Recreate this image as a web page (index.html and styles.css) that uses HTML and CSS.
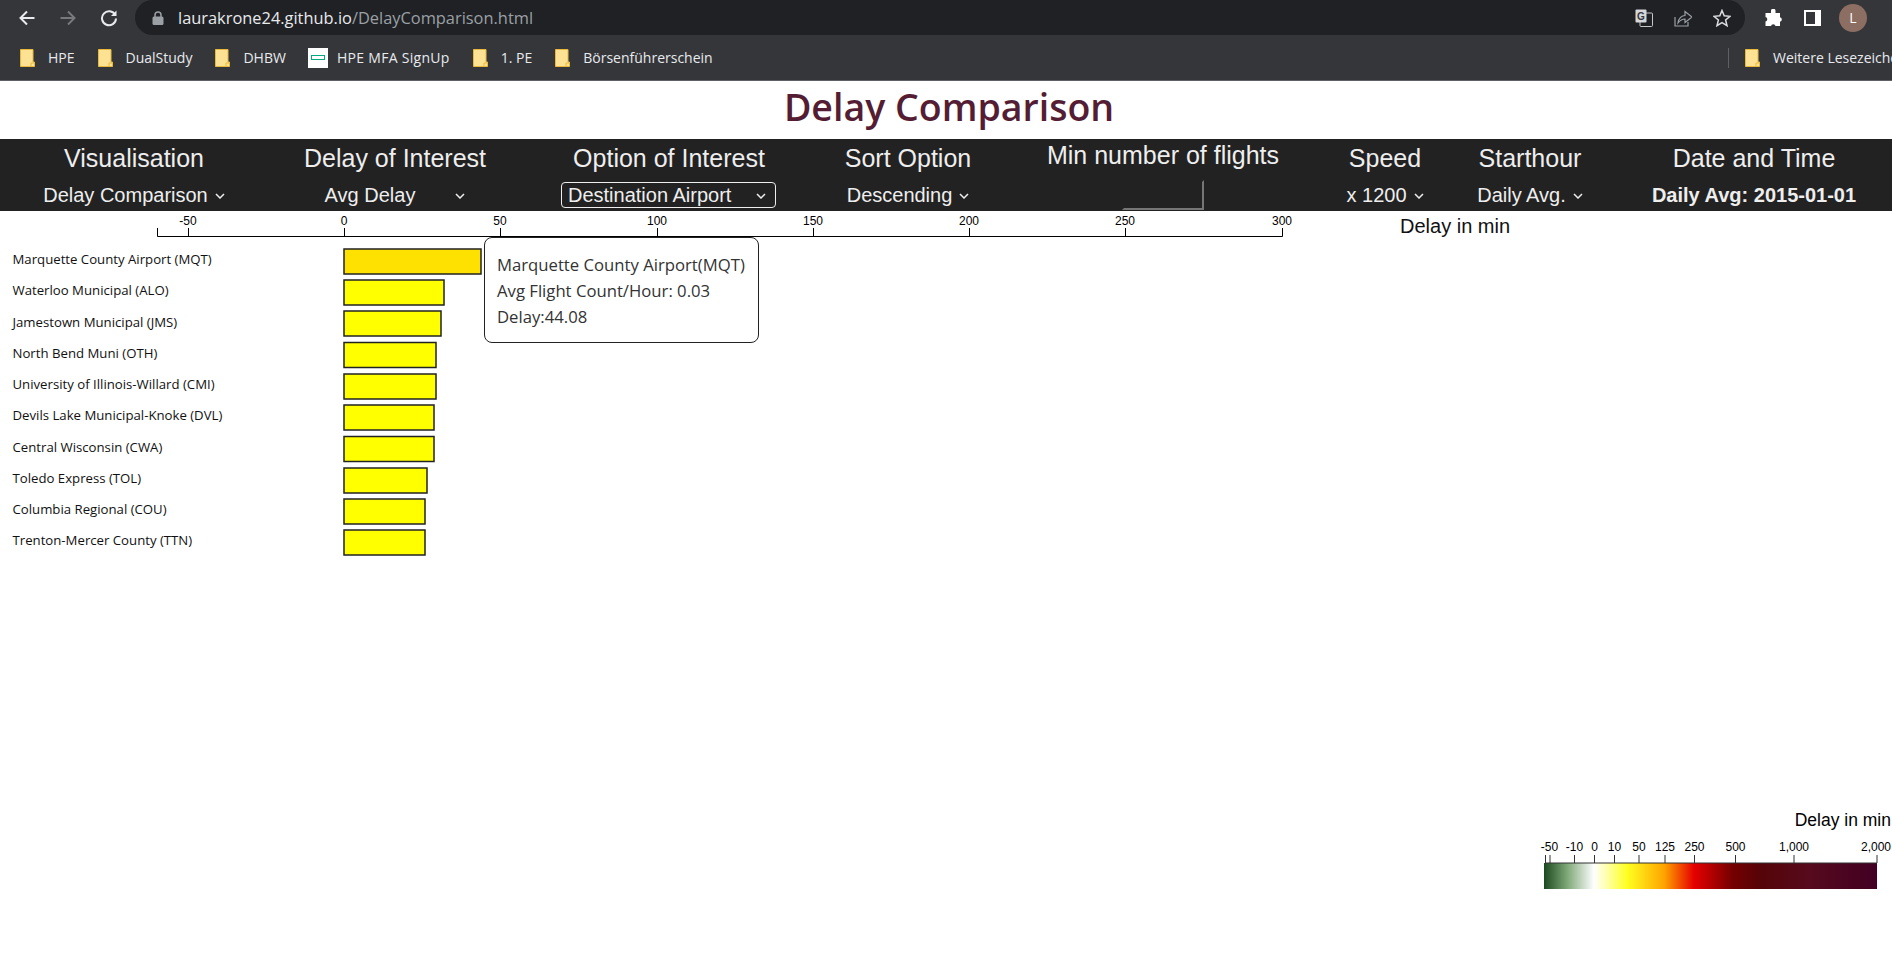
FILE: index.html
```html
<!DOCTYPE html>
<html><head>
<meta charset="utf-8">
<title>Delay Comparison</title>
<link rel="stylesheet" href="styles.css">
</head>
<body>

<div class="toolbar">
	<svg class="nav-icon" width="18" height="18" viewBox="0 0 18 18"><path d="M16.5 9H2.5M9 2.5L2.5 9L9 15.5" class="ico-line"/></svg>
	<svg class="nav-icon" width="18" height="18" viewBox="0 0 18 18"><path d="M1.5 9H15.5M9 2.5L15.5 9L9 15.5" class="ico-line ico-dim"/></svg>
	<svg class="nav-icon" width="18" height="18" viewBox="0 0 18 18"><path d="M15.2 6A7 7 0 1 0 16 9.500" class="ico-line"/><path d="M16.500 1.500V7H11Z" class="ico-fill"/></svg>
	<div class="omnibox">
		<svg class="lock" width="12" height="14" viewBox="0 0 12 14"><path d="M3 6V4a3 3 0 0 1 6 0v2" class="ico-lock"/><rect x="0.500" y="5.500" width="11" height="8.500" rx="1.500" fill="#9aa0a6"/></svg>
		<span class="url">laurakrone24.github.io<span class="url-path">/DelayComparison.html</span></span>
		<div class="omni-icons">
			<svg width="18" height="18" viewBox="0 0 18 18"><rect x="5" y="4" width="12.500" height="13.500" rx="1" fill="none" stroke="#c4c7c5"/><rect x="0.500" y="0.500" width="11" height="13" rx="1" fill="#d5d7da"/><text x="6" y="11" class="g-letter">G</text></svg>
			<svg width="18" height="18" viewBox="0 0 18 18"><path d="M1 8V17H14V13" class="ico-thin"/><path d="M4 14C4.500 9 8 6.500 11 6.500V2.500L18 8L11 13.500V10C8 10 6 11.500 4 14Z" class="ico-thin"/></svg>
			<svg width="18" height="18" viewBox="0 0 18 18"><path d="M9 1.500L11.200 6.800L17 7.300L12.600 11L14 16.700L9 13.700L4 16.700L5.400 11L1 7.300L6.800 6.800Z" class="ico-star"/></svg>
		</div>
	</div>
	<div class="profile-icons">
		<svg width="18" height="18" viewBox="0 0 18 18"><path d="M7 1.500a2.300 2.300 0 0 1 4.500 0V4H16V8.200a2.300 2.300 0 0 1 0 4.500V17H11.500a2.300 2.300 0 0 0-4.500 0H1.500V12.500a2.300 2.300 0 0 0 0-4.500V4H7Z" fill="#fff"/></svg>
		<svg width="17" height="16" viewBox="0 0 17 16"><rect x="1" y="1" width="15" height="14" fill="none" stroke="#fff" stroke-width="2"/><rect x="11" y="1" width="5" height="14" fill="#fff"/></svg>
		<div class="avatar">L</div>
	</div>
</div>

<div class="bookmarks">
	<div class="bm"><svg class="folder" viewBox="0 0 15 18"><use href="#folder-shape"/></svg><span>HPE</span></div>
	<div class="bm"><svg class="folder" viewBox="0 0 15 18"><use href="#folder-shape"/></svg><span>DualStudy</span></div>
	<div class="bm"><svg class="folder" viewBox="0 0 15 18"><use href="#folder-shape"/></svg><span>DHBW</span></div>
	<div class="bm bm-site"><div class="hpe-logo"><div class="hpe-mark"></div></div><span>HPE MFA SignUp</span></div>
	<div class="bm"><svg class="folder" viewBox="0 0 15 18"><use href="#folder-shape"/></svg><span>1. PE</span></div>
	<div class="bm"><svg class="folder" viewBox="0 0 15 18"><use href="#folder-shape"/></svg><span>Börsenführerschein</span></div>
	<div class="bm-more">
		<svg class="folder" viewBox="0 0 15 18"><use href="#folder-shape"/></svg><span>Weitere Lesezeichen</span>
	</div>
</div>

<svg class="defs" width="0" height="0">
	<defs>
		<g id="folder-shape">
			<path d="M0.500 0.500H13V13H14.500V17.500H0.500Z" fill="#fde293" stroke="#e8b93a"/>
			<path d="M11 17V14H14" fill="none" stroke="#e8b93a"/>
		</g>
		<linearGradient id="legend-grad">
			<stop offset="0" stop-color="#1b4a20"/>
			<stop offset="0.07" stop-color="#7fa878"/>
			<stop offset="0.15" stop-color="#ffffff"/>
			<stop offset="0.25" stop-color="#ffff20"/>
			<stop offset="0.36" stop-color="#ffa500"/>
			<stop offset="0.45" stop-color="#e60000"/>
			<stop offset="0.57" stop-color="#720000"/>
			<stop offset="0.65" stop-color="#550408"/>
			<stop offset="0.80" stop-color="#560a1c"/>
			<stop offset="1" stop-color="#420024"/>
		</linearGradient>
	</defs>
</svg>

<h1 class="title">Delay Comparison</h1>

<div class="controls">
	<div class="ctl"><h3>Visualisation</h3><div class="sel">Delay Comparison<svg class="chev" viewBox="0 0 10 6"><path d="M1 1L5 5L9 1"/></svg></div></div>
	<div class="ctl"><h3>Delay of Interest</h3><div class="sel sel-wide">Avg Delay<svg class="chev" viewBox="0 0 10 6"><path d="M1 1L5 5L9 1"/></svg></div></div>
	<div class="ctl"><h3>Option of Interest</h3><div class="sel sel-focus">Destination Airport<svg class="chev" viewBox="0 0 10 6"><path d="M1 1L5 5L9 1"/></svg></div></div>
	<div class="ctl"><h3>Sort Option</h3><div class="sel">Descending<svg class="chev" viewBox="0 0 10 6"><path d="M1 1L5 5L9 1"/></svg></div></div>
	<div class="ctl ctl-input"><h3>Min number of flights</h3><input type="text" class="min-flights"></div>
	<div class="ctl"><h3>Speed</h3><div class="sel">x 1200<svg class="chev" viewBox="0 0 10 6"><path d="M1 1L5 5L9 1"/></svg></div></div>
	<div class="ctl"><h3>Starthour</h3><div class="sel">Daily Avg.<svg class="chev" viewBox="0 0 10 6"><path d="M1 1L5 5L9 1"/></svg></div></div>
	<div class="ctl"><h3>Date and Time</h3><div class="sel sel-date">Daily Avg: 2015-01-01</div></div>
</div>

<div class="main">
	<svg class="chart" width="1892" height="754" viewBox="0 0 1892 754">
		<!-- top axis -->
		<path class="axis" d="M157.500 17V25.500H1282.500V17"/>
		<g class="ticks">
			<path d="M188.500 17V25M344.500 17V25M500.500 17V25M657.500 17V25M813.500 17V25M969.500 17V25M1125.500 17V25"/>
		</g>
		<g class="tick-text">
			<text x="188" y="14">-50</text>
			<text x="344" y="14">0</text>
			<text x="500" y="14">50</text>
			<text x="657" y="14">100</text>
			<text x="813" y="14">150</text>
			<text x="969" y="14">200</text>
			<text x="1125" y="14">250</text>
			<text x="1282" y="14">300</text>
		</g>
		<text class="axis-title" x="1400" y="22">Delay in min</text>

		<!-- airports -->
		<g class="names">
			<text x="12.500" y="53">Marquette County Airport (MQT)</text>
			<text x="12.500" y="84">Waterloo Municipal (ALO)</text>
			<text x="12.500" y="116">Jamestown Municipal (JMS)</text>
			<text x="12.500" y="147">North Bend Muni (OTH)</text>
			<text x="12.500" y="178">University of Illinois-Willard (CMI)</text>
			<text x="12.500" y="209">Devils Lake Municipal-Knoke (DVL)</text>
			<text x="12.500" y="241">Central Wisconsin (CWA)</text>
			<text x="12.500" y="272">Toledo Express (TOL)</text>
			<text x="12.500" y="303">Columbia Regional (COU)</text>
			<text x="12.500" y="334">Trenton-Mercer County (TTN)</text>
		</g>
		<g class="bars">
			<rect class="bar-hover" x="344" y="38" width="137" height="25"/>
			<rect x="344" y="69" width="100" height="25"/>
			<rect x="344" y="100" width="97" height="25"/>
			<rect x="344" y="131.500" width="92" height="25"/>
			<rect x="344" y="163" width="92" height="25"/>
			<rect x="344" y="194" width="90" height="25"/>
			<rect x="344" y="225.500" width="90" height="25"/>
			<rect x="344" y="257" width="83" height="25"/>
			<rect x="344" y="288" width="81" height="25"/>
			<rect x="344" y="319" width="81" height="25"/>
		</g>

		<!-- colour legend -->
		<text class="legend-title" x="1891" y="615">Delay in min</text>
		<g class="legend-text">
			<text x="1549.500" y="640">-50</text>
			<text x="1574.500" y="640">-10</text>
			<text x="1594.500" y="640">0</text>
			<text x="1614.500" y="640">10</text>
			<text x="1639" y="640">50</text>
			<text x="1665" y="640">125</text>
			<text x="1694.500" y="640">250</text>
			<text x="1735.500" y="640">500</text>
			<text x="1794" y="640">1,000</text>
			<text x="1876" y="640">2,000</text>
		</g>
		<rect x="1544" y="652" width="333" height="26" fill="url(#legend-grad)"/>
		<path class="axis legend-axis" d="M1545.500 644V652H1877V644M1550 644V652M1574.500 644V652M1594.500 644V652M1614.500 644V652M1639 644V652M1665 644V652M1694.500 644V652M1735.500 644V652M1794 644V652"/>
	</svg>

	<div class="tooltip">
		<div>Marquette County Airport(MQT)</div>
		<div>Avg Flight Count/Hour: 0.03</div>
		<div>Delay:44.08</div>
	</div>
</div>

</body>
</html>
```

FILE: styles.css
```css
body
{
	margin: 0;
	background-color: white;
	font-family: "Liberation Sans", Arial, sans-serif;
	width: 1892px;
	height: 965px;
	overflow: hidden;
}
.defs
{
	display: block;
	height: 0;
}

/* browser chrome */
.toolbar
{
	display: flex;
	align-items: center;
	height: 35px;
	background-color: #35363a;
}
.nav-icon
{
	margin-left: 19px;
	margin-right: 4px;
	flex: none;
}
.nav-icon:first-child
{
	margin-left: 18px;
}
.ico-line
{
	fill: none;
	stroke: #e8eaed;
	stroke-width: 2;
}
.ico-dim
{
	stroke: #77797d;
}
.ico-fill
{
	fill: #e8eaed;
}
.ico-lock
{
	fill: none;
	stroke: #9aa0a6;
	stroke-width: 1.5;
}
.ico-thin
{
	fill: none;
	stroke: #9aa0a6;
	stroke-width: 1.2;
}
.ico-star
{
	fill: none;
	stroke: #dadce0;
	stroke-width: 1.5;
}
.g-letter
{
	font-family: "Liberation Sans", sans-serif;
	font-size: 10px;
	font-weight: bold;
	fill: #35363a;
	text-anchor: middle;
}
.omnibox
{
	display: flex;
	align-items: center;
	height: 35px;
	width: 1610px;
	margin-left: 13px;
	background-color: #202124;
	border-radius: 18px;
	flex: none;
}
.lock
{
	margin-left: 17px;
	flex: none;
}
.url
{
	margin-left: 14px;
	font-family: "Open Sans", sans-serif;
	font-size: 16.400px;
	color: #e8eaed;
	white-space: nowrap;
}
.url-path
{
	color: #9aa0a6;
}
.omni-icons
{
	display: flex;
	gap: 21px;
	margin-left: auto;
	margin-right: 14px;
}
.profile-icons
{
	display: flex;
	align-items: center;
	margin-left: 19px;
	gap: 22px;
}
.avatar
{
	width: 28px;
	height: 28px;
	border-radius: 50%;
	background-color: #8d6e63;
	color: #fff;
	font-family: "Open Sans", sans-serif;
	font-size: 14px;
	line-height: 28px;
	text-align: center;
	margin-left: -4px;
}
.bookmarks
{
	display: flex;
	align-items: center;
	height: 45px;
	padding-left: 20px;
	gap: 23px;
	background-color: #35363a;
	border-bottom: 1px solid #5f6065;
	color: #e8eaed;
	font-family: "Open Sans", sans-serif;
	font-size: 14px;
	box-sizing: content-box;
}
.bm, .bm-more
{
	display: flex;
	align-items: center;
	gap: 13px;
	white-space: nowrap;
}
.bm-site
{
	gap: 9px;
	margin-left: -1px;
	letter-spacing: 0.300px;
}
.folder
{
	width: 15px;
	height: 18px;
	flex: none;
}
.hpe-logo
{
	display: flex;
	align-items: center;
	justify-content: center;
	width: 20px;
	height: 20px;
	background-color: white;
}
.hpe-mark
{
	width: 14px;
	height: 5px;
	border: 1.500px solid #01a982;
	box-sizing: border-box;
}
.bm-more
{
	margin-left: auto;
	width: 147px;
	flex: none;
	overflow: hidden;
	height: 20px;
	padding-left: 16px;
	border-left: 1px solid #5f6065;
}

/* page */
.title
{
	margin: 0;
	height: 58px;
	padding-left: 6px;
	line-height: 52px;
	text-align: center;
	font-family: "Open Sans", sans-serif;
	font-size: 37.500px;
	font-weight: 600;
	color: #541d33;
}
.controls
{
	display: grid;
	grid-template-columns: 268px 254px 294px 184px 326px 118px 172px 276px;
	height: 72px;
	background-color: #222;
	color: #eee;
}
.ctl
{
	display: flex;
	flex-direction: column;
	align-items: center;
}
.ctl h3
{
	margin: 4px 0 0;
	height: 31px;
	line-height: 30px;
	font-size: 25px;
	font-weight: normal;
	white-space: nowrap;
}
.ctl-input h3
{
	margin-top: 1px;
	height: 34px;
	line-height: 30px;
}
.sel
{
	display: flex;
	align-items: center;
	justify-content: center;
	gap: 7px;
	height: 26px;
	margin-top: 8px;
	font-size: 20px;
	white-space: nowrap;
}
.sel-wide
{
	gap: 40px;
}
.sel-focus
{
	width: 215px;
	box-sizing: border-box;
	justify-content: space-between;
	padding: 0 9px 0 6px;
	border: 1px solid #eee;
	border-radius: 4px;
	margin-left: -1px;
}
.sel-date
{
	font-weight: bold;
}
.chev
{
	width: 10px;
	height: 6px;
	margin-top: 2px;
	fill: none;
	stroke: #eee;
	stroke-width: 1.5;
}
.min-flights
{
	width: 82px;
	height: 30px;
	box-sizing: border-box;
	margin: 6px 0 0;
	background-color: #222;
	border: 2px solid;
	border-color: #222 #767676 #767676 #222;
}

/* chart */
.main
{
	position: relative;
}
.chart
{
	display: block;
}
.axis, .ticks path
{
	fill: none;
	stroke: #000;
	stroke-width: 1;
}
.tick-text text
{
	font-size: 12px;
	text-anchor: middle;
	fill: #000;
}
.axis-title
{
	font-size: 20px;
	fill: #111;
}
.names text
{
	font-family: "Open Sans", sans-serif;
	font-size: 13.200px;
	fill: #111;
}
.bars rect
{
	fill: #ffff00;
	stroke: #222;
	stroke-width: 1.500;
}
.bars .bar-hover
{
	fill: #ffe100;
}
.legend-title
{
	font-size: 17.500px;
	text-anchor: end;
	fill: #000;
}
.legend-text text
{
	font-size: 12px;
	text-anchor: middle;
	fill: #000;
}
.legend-axis
{
	stroke: #333;
}
.tooltip
{
	position: absolute;
	left: 484px;
	top: 26px;
	width: 275px;
	height: 106px;
	box-sizing: border-box;
	padding: 14px 12px;
	background-color: white;
	border: 1px solid #222;
	border-radius: 8px;
	font-family: "Open Sans", sans-serif;
	font-size: 16.700px;
	line-height: 26px;
	color: #333;
	white-space: nowrap;
}
```
